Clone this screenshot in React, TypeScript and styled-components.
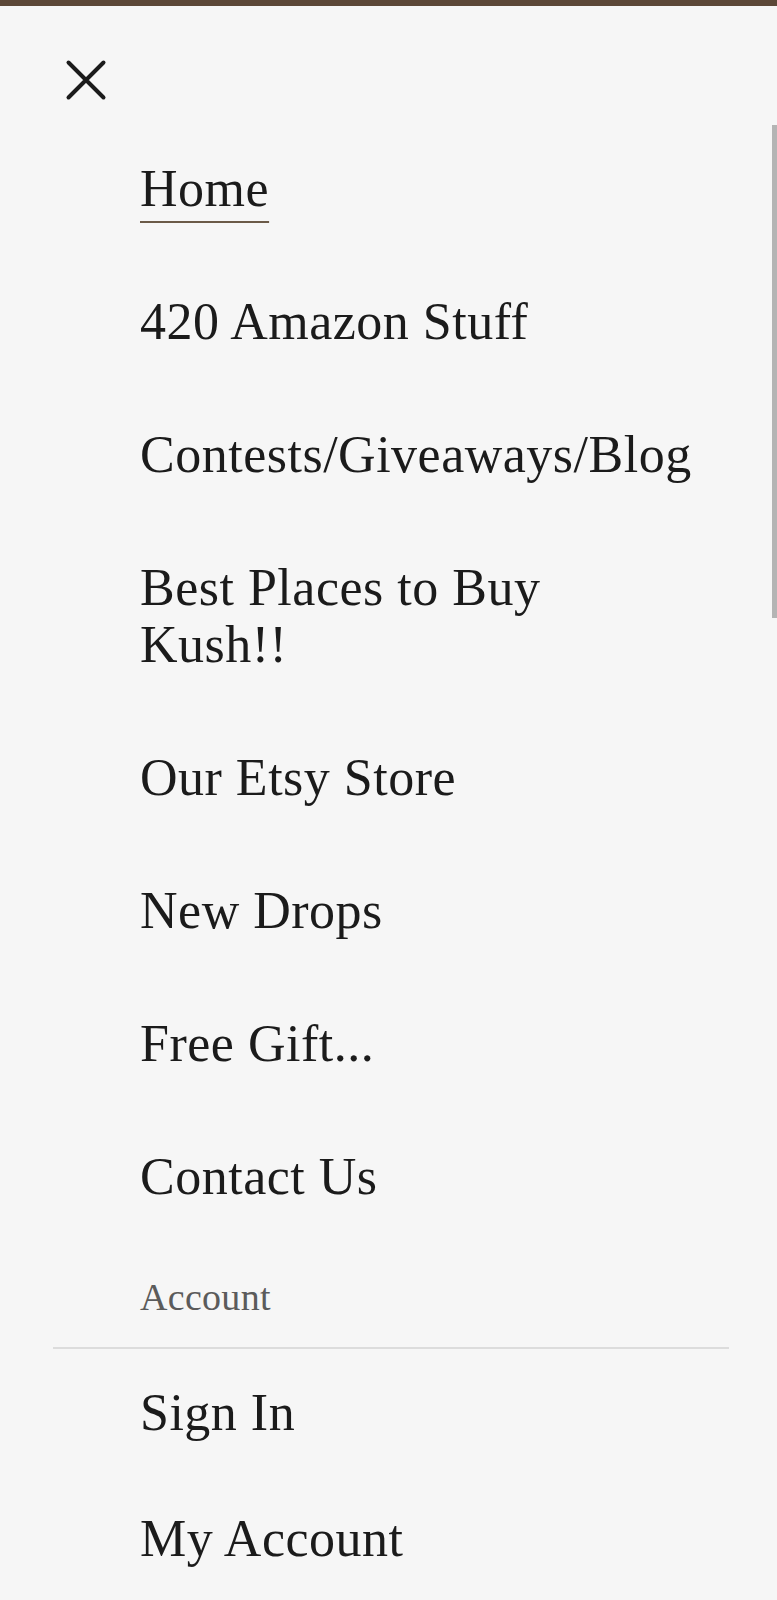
import React from 'react'
import styled, { createGlobalStyle, css } from 'styled-components'

const GlobalStyle = createGlobalStyle`
  html, body {
    margin: 0;
    padding: 0;
    background: #f6f6f6;
  }
  body {
    font-family: "Liberation Serif", "Times New Roman", serif;
    color: #1b1b1b;
  }
`

const Drawer = styled.div`
  position: relative;
  min-height: 1600px;
  background: #f6f6f6;
  overflow: hidden;
`

const TopBar = styled.div`
  height: 6px;
  background: #5c4838;
`

const Header = styled.div`
  display: flex;
  align-items: center;
  padding: 52px 0 0 64px;
`

const CloseButton = styled.button`
  display: flex;
  align-items: center;
  justify-content: center;
  width: 44px;
  height: 44px;
  padding: 0;
  border: none;
  background: transparent;
  color: #1b1b1b;
  cursor: pointer;
`

const Nav = styled.nav`
  display: flex;
  flex-direction: column;
  gap: 76px;
  margin-top: 58px;
  padding-left: 140px;
`

const NavLink = styled.a<{ active?: boolean, nowrap?: boolean }>`
  display: block;
  max-width: 470px;
  font-size: 52px;
  line-height: 57px;
  letter-spacing: 0.5px;
  color: #1b1b1b;
  text-decoration: none;
  white-space: ${({ nowrap }) => (nowrap ? 'nowrap' : 'normal')};

  ${({ active }) => active && css`
    span {
      text-decoration: underline;
      text-decoration-color: #6b5a48;
      text-decoration-thickness: 2px;
      text-underline-offset: 15px;
    }
  `}
`

const AccountSection = styled.div`
  margin-top: 69px;
  padding: 0 48px 0 53px;
`

const SectionLabel = styled.div`
  padding-left: 87px;
  font-size: 38px;
  line-height: 46px;
  letter-spacing: 0.3px;
  color: #5b5b5b;
`

const Divider = styled.hr`
  margin: 27px 0 0;
  border: none;
  height: 2px;
  background: #dcdcdc;
`

const AccountNav = styled(Nav)`
  gap: 69px;
  margin-top: 35px;
  padding-left: 87px;
`

const ScrollThumb = styled.div`
  position: absolute;
  top: 125px;
  right: 0;
  width: 5px;
  height: 493px;
  background: #b4b4b4;
`

const CloseIcon = () => (
  <svg width="44" height="44" viewBox="0 0 44 44" fill="none">
    <path d="M4.5 4.5 L39.5 39.5 M39.5 4.5 L4.5 39.5" stroke="currentColor" strokeWidth="4" strokeLinecap="round" />
  </svg>
)

const links = [
  { label: 'Home', active: true },
  { label: '420 Amazon Stuff' },
  { label: 'Contests/Giveaways/Blog', nowrap: true },
  { label: 'Best Places to Buy Kush!!' },
  { label: 'Our Etsy Store' },
  { label: 'New Drops' },
  { label: 'Free Gift...' },
  { label: 'Contact Us' },
]

const App: React.FC = () => (
  <>
    <GlobalStyle />
    <Drawer>
      <TopBar />
      <Header>
        <CloseButton aria-label="Close menu">
          <CloseIcon />
        </CloseButton>
      </Header>
      <Nav>
        {links.map((link) => (
          <NavLink key={link.label} href="#" active={link.active} nowrap={link.nowrap}>
            <span>{link.label}</span>
          </NavLink>
        ))}
      </Nav>
      <AccountSection>
        <SectionLabel>Account</SectionLabel>
        <Divider />
        <AccountNav>
          <NavLink href="#"><span>Sign In</span></NavLink>
          <NavLink href="#"><span>My Account</span></NavLink>
        </AccountNav>
      </AccountSection>
      <ScrollThumb />
    </Drawer>
  </>
)

export default App
